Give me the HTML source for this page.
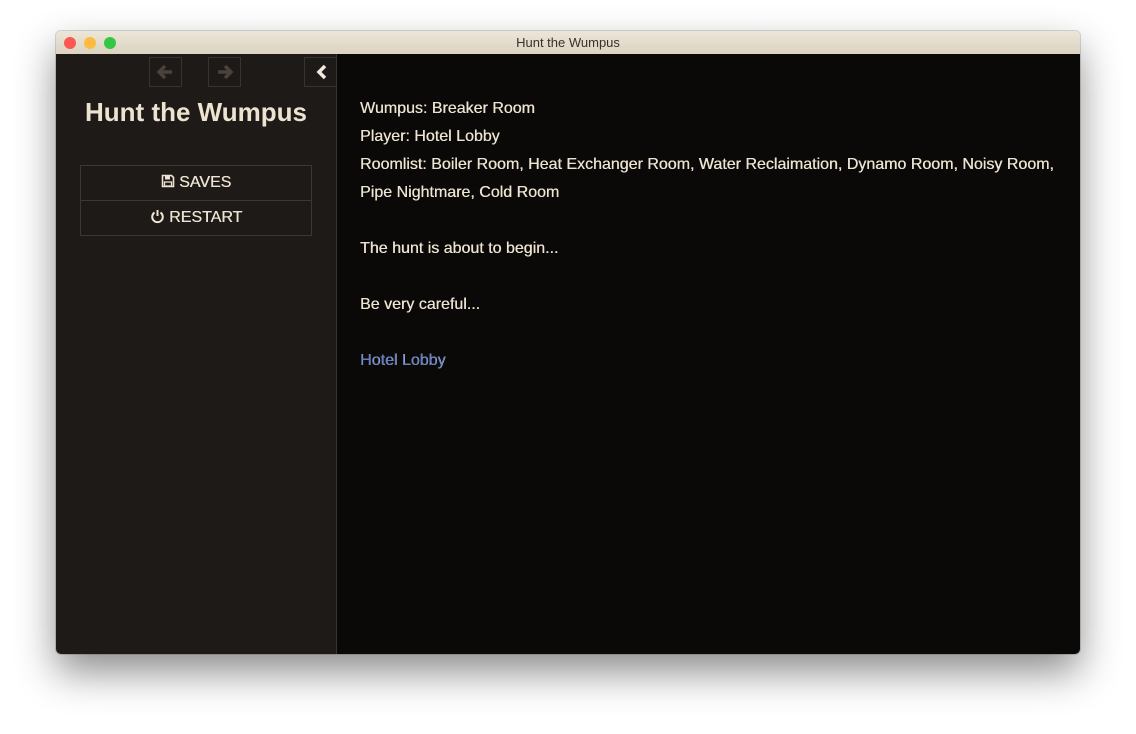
<!DOCTYPE html>
<html><head><meta charset="utf-8"><style>
html,body{margin:0;padding:0;width:1136px;height:734px;background:#fff;overflow:hidden;font-family:"Liberation Sans",sans-serif}
.win{position:absolute;left:56px;top:31px;width:1024px;height:623px;border-radius:5px;overflow:hidden;box-shadow:0 18px 40px rgba(0,0,0,0.45),0 0 0 1px rgba(0,0,0,0.15)}
.tb{position:absolute;left:0;top:0;width:1024px;height:23px;background:linear-gradient(#ece6da,#dcd3c0);text-align:center;font-size:13px;line-height:23px;color:#3a3027}
.dot{position:absolute;top:6px;width:12px;height:12px;border-radius:50%}
.side{position:absolute;left:0;top:23px;width:280px;height:600px;background:#1e1a17;border-right:1px solid #3a3431}
.main{position:absolute;left:281px;top:23px;width:743px;height:600px;background:#0b0908}
.nb{position:absolute;top:3px;width:33px;height:30px;border:1px solid #3a3431;box-sizing:border-box}
h1{position:absolute;left:0;width:280px;top:43px;margin:0;text-align:center;font-size:26px;font-weight:bold;color:#ece3d1}
.btn{position:absolute;left:24px;width:232px;height:36px;border:1px solid #3d3733;box-sizing:border-box;color:#ece3d1;font-size:16px;text-align:center;line-height:34px;text-shadow:0.3px 0 0 #ece3d1}
.txt{position:absolute;left:23px;top:41px;color:#ece3d1;font-size:16px;line-height:28px;width:710px;text-shadow:0.3px 0 0 #ece3d1}
</style></head><body>
<div class="win">
<div class="tb">Hunt the Wumpus
<div class="dot" style="left:8px;background:#fc5753"></div>
<div class="dot" style="left:28px;background:#fdbc40"></div>
<div class="dot" style="left:48px;background:#33c748"></div>
</div>
<div class="side">
<div class="nb" style="left:93px"><svg width="31" height="28" viewBox="0 0 31 28"><path d="M10 14h12M15 8l-6 6 6 6" stroke="#4a413b" stroke-width="3.5" fill="none"/></svg></div>
<div class="nb" style="left:152px"><svg width="31" height="28" viewBox="0 0 31 28"><path d="M9 14h12M16 8l6 6-6 6" stroke="#4a413b" stroke-width="3.5" fill="none"/></svg></div>
<div class="nb" style="left:248px;width:34px"><svg width="32" height="28" viewBox="0 0 32 28"><path d="M20 8l-6 6 6 6" stroke="#f2ebdd" stroke-width="3.5" fill="none"/></svg></div>
<h1>Hunt the Wumpus</h1>
<div class="btn" style="top:111px"><svg width="14" height="14" viewBox="0 0 14 14" style="vertical-align:-1px"><path d="M1.5 1.5h9l2 2v9h-11z" fill="none" stroke="#ece3d1" stroke-width="1.6"/><rect x="4" y="2" width="5" height="3.5" fill="#ece3d1"/><rect x="3.5" y="8" width="7" height="4" fill="none" stroke="#ece3d1" stroke-width="1.3"/></svg> SAVES</div>
<div class="btn" style="top:146px"><svg width="15" height="15" viewBox="0 0 15 15" style="vertical-align:-2px"><path d="M4.5 3.5a5.3 5.3 0 1 0 6 0" fill="none" stroke="#ece3d1" stroke-width="2"/><path d="M7.5 1v6" stroke="#ece3d1" stroke-width="2"/></svg> RESTART</div>
</div>
<div class="main"><div class="txt">
Wumpus: Breaker Room<br>Player: Hotel Lobby<br>Roomlist: Boiler Room, Heat Exchanger Room, Water Reclaimation, Dynamo Room, Noisy Room, Pipe Nightmare, Cold Room<br><br>The hunt is about to begin...<br><br>Be very careful...<br><br><span style="color:#5f7fc9">Hotel Lobby</span>
</div></div>
</div>
</body></html>
